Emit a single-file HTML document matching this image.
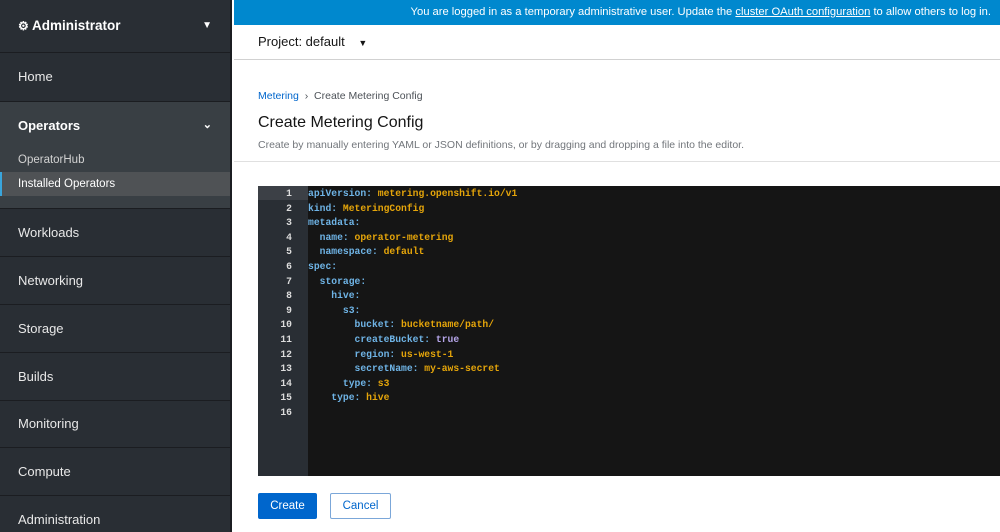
<!DOCTYPE html>
<html><head><meta charset="utf-8"><style>
*{box-sizing:border-box;margin:0;padding:0}
body{width:1000px;height:532px;overflow:hidden;font-family:"Liberation Sans",sans-serif;background:#fff;position:relative}
#side{position:absolute;left:0;top:0;width:232px;height:532px;background:#292e34;border-right:2px solid #1b1d21;overflow:hidden}
.sec{position:absolute;left:0;width:232px;border-bottom:1px solid #1b1d21;color:#e8e8e8;font-size:13px;padding-left:18px}
.item{height:48px;line-height:48px}
#ops{background:#393f44}
#top{position:absolute;left:234px;top:0;right:0;height:25px;background:#0088ce;color:#fff;font-size:11.2px;text-align:right;padding-right:9px;line-height:25px}
#proj{position:absolute;left:234px;top:25px;right:0;height:35px;border-bottom:1px solid #d1d1d1;font-size:13px;color:#151515;padding-left:24px;line-height:34px}
#head{position:absolute;left:234px;top:60px;right:0;height:102px;border-bottom:1px solid #e0e0e0}
#code{position:absolute;left:258px;top:186px;width:742px;height:290px;background:#151515}
#gut{position:absolute;left:0;top:0;width:50px;height:100%;background:#292e34}
.ln{position:absolute;left:0;width:34px;text-align:right;color:#ddd;font:bold 9.7px/14.6px "Liberation Mono",monospace}
.cl{position:absolute;left:50px;white-space:pre;font:bold 9.7px/14.6px "Liberation Mono",monospace;color:#6fb4e6}
.v{color:#e5a50a}.p{color:#b6a6ea}
.btn{position:absolute;top:493px;height:26px;font-size:11.5px;line-height:24px;text-align:center;border-radius:2px}
</style></head><body>
<div id="side">
 <div class="sec" style="top:0;height:53px;line-height:52px;font-weight:bold;font-size:13.5px;color:#fff"><span style="font-size:12px">⚙</span> Administrator<span style="position:absolute;right:20px;top:0;font-size:10px">▼</span></div>
 <div class="sec item" style="top:53px;height:49px">Home</div>
 <div class="sec" id="ops" style="top:102px;height:107px">
  <div style="height:47px;line-height:47px;font-weight:bold;color:#fff">Operators<span style="position:absolute;right:20px;top:0;font-size:11px">⌄</span></div>
  <div style="font-size:11.5px;color:#d2d2d2;height:22px;line-height:22px">OperatorHub</div>
  <div style="position:absolute;left:0;top:70px;width:230px;height:24px;background:#4f5255;border-left:2px solid #39a5dc;padding-left:16px;font-size:11.5px;line-height:24px;color:#fff">Installed Operators</div>
 </div>
 <div class="sec item" style="top:209px">Workloads</div>
 <div class="sec item" style="top:257px">Networking</div>
 <div class="sec item" style="top:305px">Storage</div>
 <div class="sec item" style="top:353px">Builds</div>
 <div class="sec item" style="top:400px">Monitoring</div>
 <div class="sec item" style="top:448px">Compute</div>
 <div class="sec item" style="top:496px;border-bottom:none">Administration</div>
</div>
<div id="top">You are logged in as a temporary administrative user. Update the <u>cluster OAuth configuration</u> to allow others to log in.</div>
<div id="proj">Project: default <span style="font-size:9px;margin-left:10px">▼</span></div>
<div id="head">
 <div style="position:absolute;left:24px;top:30px;font-size:10.5px;color:#4d5258"><span style="color:#0066cc">Metering</span> &nbsp;›&nbsp; Create Metering Config</div>
 <div style="position:absolute;left:24px;top:54px;font-size:16px;color:#151515">Create Metering Config</div>
 <div style="position:absolute;left:24px;top:79px;font-size:10.5px;color:#72767b">Create by manually entering YAML or JSON definitions, or by dragging and dropping a file into the editor.</div>
</div>
<div id="code">
 <div id="gut"></div>
 <div style="position:absolute;left:0;top:0;width:50px;height:14px;background:#3c4046"></div>
 <div class="ln" style="top:1px">1<br>2<br>3<br>4<br>5<br>6<br>7<br>8<br>9<br>10<br>11<br>12<br>13<br>14<br>15<br>16</div>
 <div class="cl" style="top:1px">apiVersion: <span class="v">metering.openshift.io/v1</span>
kind: <span class="v">MeteringConfig</span>
metadata:
  name: <span class="v">operator-metering</span>
  namespace: <span class="v">default</span>
spec:
  storage:
    hive:
      s3:
        bucket: <span class="v">bucketname/path/</span>
        createBucket: <span class="p">true</span>
        region: <span class="v">us-west-1</span>
        secretName: <span class="v">my-aws-secret</span>
      type: <span class="v">s3</span>
    type: <span class="v">hive</span>
</div>
</div>
<div class="btn" style="left:258px;width:59px;background:#0066cc;color:#fff;border:1px solid #0066cc">Create</div>
<div class="btn" style="left:330px;width:61px;background:#fff;color:#0066cc;border:1px solid #7ba7d9">Cancel</div>
</body></html>
